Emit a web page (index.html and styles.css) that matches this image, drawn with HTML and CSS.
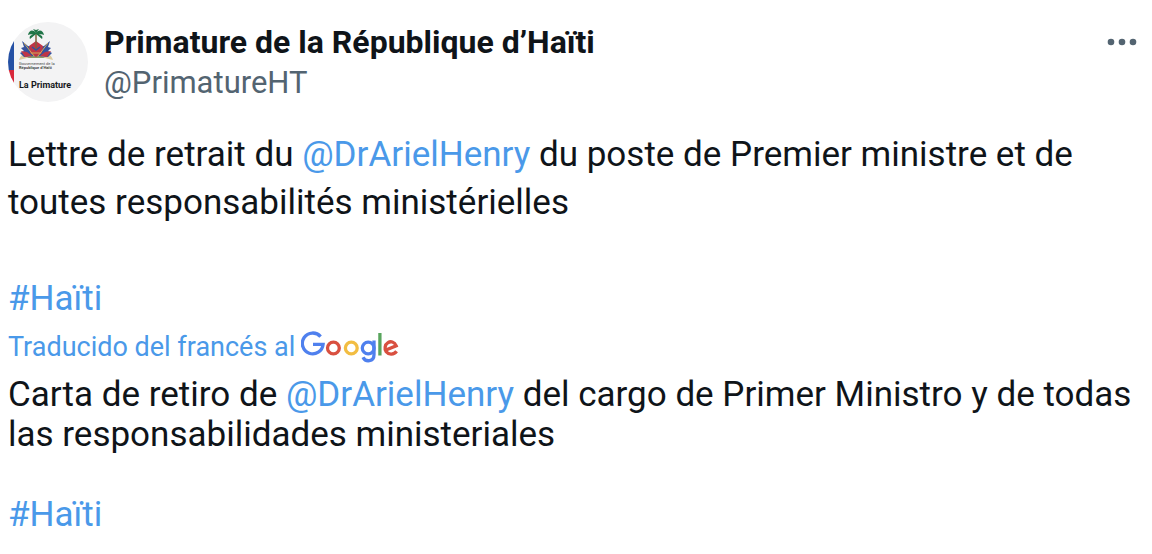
FILE: index.html
```html
<!DOCTYPE html>
<html lang="fr">
<head>
<meta charset="utf-8">
<meta name="viewport" content="width=device-width, initial-scale=1">
<title>Primature de la République d’Haïti</title>
<link rel="stylesheet" href="styles.css">
</head>
<body>
<article class="post">
  <header class="header">
    <svg class="avatar" viewBox="0 0 80 80" role="img" aria-label="La Primature">
      <defs><clipPath id="disc"><circle cx="40" cy="40" r="40"/></clipPath></defs>
      <g clip-path="url(#disc)">
        <rect width="80" height="80" fill="#f3f3f4"/>
        <rect y="0" width="6" height="48" fill="#2450a4"/>
        <rect y="48" width="6" height="32" fill="#d8283c"/>
        <path d="M11 38q2-6 6-5h22q4-1 6 5l-8-2H19z" fill="#dccb9e"/>
        <path d="M19 36l9-5 9 5z" fill="#8c9868"/>
        <path d="M14 19l6 5 5 1 1 9-10 1-4-4 4-2-3-3 3-1zM42 19l-6 5-5 1-1 9 10 1 4-4-4-2 3-3-3-1z" fill="#34529d"/>
        <path d="M13 29l6 1 5 4-7 1zM43 29l-6 1-5 4 7 1zM21 24l7-5 7 5-1 7-6 4-6-4z" fill="#bf3547"/>
        <path d="M16 21l10 13M40 21l-10 13M23 31h10" stroke="#cfab59" stroke-width="1"/>
        <path d="M24 25l4 3 4-3" stroke="#34529d" stroke-width="1.5" fill="none"/>
        <path d="M28 11v16" stroke="#7c633f" stroke-width="1.5"/>
        <path d="M28 11c-3-4-7-3-8 2 2-1 4-1 5 0-3 0-4 2-3 4l6-5 6 5c1-2 0-4-3-4 1-1 3-1 5 0-1-5-5-6-8-2l3-4-3 1-3-1z" fill="#207446"/>
        <text class="seal-light" x="11" y="43">Gouvernement de la</text>
        <text class="seal-bold" x="11" y="47">République d’Haïti</text>
        <text class="seal-name" x="11" y="66">La Primature</text>
      </g>
    </svg>
    <div class="author">
      <h1 class="name">Primature de la République d’Haïti</h1>
      <a class="handle" href="#profile">@PrimatureHT</a>
    </div>
    <button class="more" type="button" aria-label="Plus">
      <svg class="more-icon" viewBox="0 0 30 8" aria-hidden="true"><circle cx="4" cy="4" r="3.3"/><circle cx="15" cy="4" r="3.3"/><circle cx="26" cy="4" r="3.3"/></svg>
    </button>
  </header>
  <p class="original">Lettre de retrait du <a href="#author">@DrArielHenry</a> du poste de Premier ministre et de toutes responsabilités ministérielles<br><br><a href="#haiti">#Haïti</a></p>
  <div class="source" lang="es">
    <a href="#translation">Traducido del francés al</a>
    <svg class="google" viewBox="0 0 98 32" role="img" aria-label="Google">
      <g fill="none" stroke-width="3.3">
        <path d="M19.6 5.6A10.4 10.4 0 1 0 22.1 13.4H12" stroke="#4f80ee"/>
        <circle cx="32.4" cy="17" r="5.9" stroke="#d95040"/>
        <circle cx="50.3" cy="17" r="5.9" stroke="#f2bd42"/>
        <path d="M73 9.4V23.5C73 31.2 64.5 31.4 62 26.2" stroke="#4f80ee"/>
        <circle cx="67.2" cy="17" r="5.9" stroke="#4f80ee"/>
        <path d="M78.9 2V24.5" stroke="#58a55c"/>
        <path d="M84.9 19L95.2 14.8C93.5 10.5 89.5 10 87 11.7C83.8 13.7 83.2 18 85.2 20.8C87.8 24.1 93 23.9 95.6 20.2" stroke="#d95040"/>
      </g>
    </svg>
  </div>
  <p class="translated" lang="es">Carta de retiro de <a href="#author">@DrArielHenry</a> del cargo de Primer Ministro y de todas las responsabilidades ministeriales<br><br><a href="#haiti">#Haïti</a></p>
</article>
</body>
</html>
```
FILE: styles.css
```css
body {
  margin: 0;
  background: #fff;
  color: #0f1419;
  font-family: Roboto, "Liberation Sans", sans-serif;
}

a {
  color: #4a99e9;
  text-decoration: none;
}

.post {
  padding: 22px 8px 19px;
}

.header {
  display: flex;
  align-items: flex-start;
  gap: 16px;
  margin-bottom: 28px;
}

.avatar {
  flex: none;
  width: 80px;
  height: 80px;
}

.seal-light,
.seal-bold {
  font-size: 4px;
  fill: #444;
}

.seal-bold {
  font-weight: 700;
}

.seal-name {
  font-size: 9px;
  font-weight: 700;
  fill: #16181c;
}

.author {
  flex: 1;
  display: flex;
  flex-direction: column;
  align-items: flex-start;
  gap: 1px;
}

.name {
  margin: 0;
  font-size: 32px;
  line-height: 40px;
  font-weight: 700;
}

.handle {
  color: #536471;
  font-size: 31px;
  line-height: 40px;
}

.more {
  display: flex;
  align-items: center;
  height: 40px;
  padding: 0 7px;
  border: 0;
  background: none;
  cursor: pointer;
}

.more-icon {
  width: 30px;
  height: 8px;
  fill: #536471;
}

.original,
.translated {
  margin: 0;
  font-size: 35px;
}

.original {
  line-height: 48px;
}

.translated {
  line-height: 40px;
}

.source {
  display: flex;
  align-items: center;
  gap: 6px;
  margin-bottom: 4px;
  font-size: 27px;
  line-height: 48px;
}

.google {
  width: 98px;
  height: 32px;
}
```
